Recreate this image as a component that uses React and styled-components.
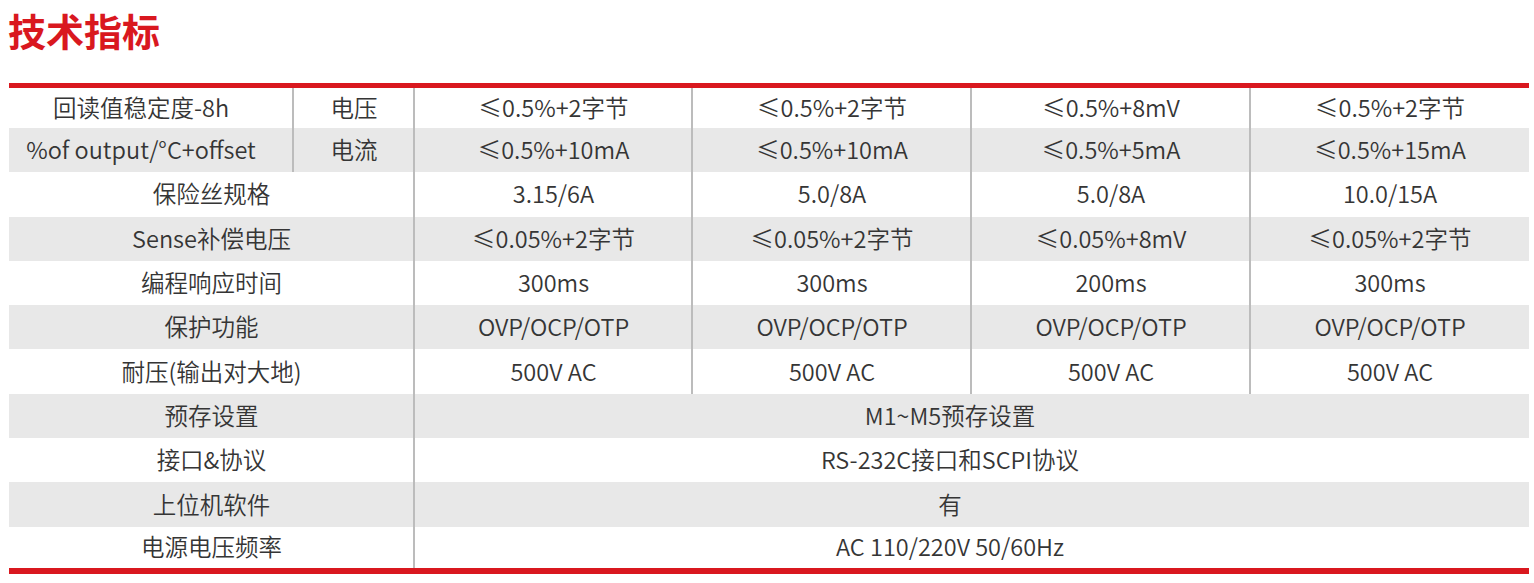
import styled, { createGlobalStyle } from "styled-components";

const GlobalStyle = createGlobalStyle`
  body {
    margin: 0;
    background: #fff;
    font-family: "Noto Sans CJK SC", "Noto Sans", sans-serif;
  }
`;

const RED = "#d9181f";

const specRows = [
  { label: "回读值稳定度-8h", sub: "电压", values: ["≤0.5%+2字节", "≤0.5%+2字节", "≤0.5%+8mV", "≤0.5%+2字节"] },
  { label: "%of output/°C+offset", sub: "电流", values: ["≤0.5%+10mA", "≤0.5%+10mA", "≤0.5%+5mA", "≤0.5%+15mA"] },
  { label: "保险丝规格", values: ["3.15/6A", "5.0/8A", "5.0/8A", "10.0/15A"] },
  { label: "Sense补偿电压", values: ["≤0.05%+2字节", "≤0.05%+2字节", "≤0.05%+8mV", "≤0.05%+2字节"] },
  { label: "编程响应时间", values: ["300ms", "300ms", "200ms", "300ms"] },
  { label: "保护功能", values: ["OVP/OCP/OTP", "OVP/OCP/OTP", "OVP/OCP/OTP", "OVP/OCP/OTP"] },
  { label: "耐压(输出对大地)", values: ["500V AC", "500V AC", "500V AC", "500V AC"] },
  { label: "预存设置", wide: "M1~M5预存设置" },
  { label: "接口&协议", wide: "RS-232C接口和SCPI协议" },
  { label: "上位机软件", wide: "有" },
  { label: "电源电压频率", wide: "AC 110/220V 50/60Hz" },
];

export default function App() {
  return (
    <Page>
      <GlobalStyle />
      <Title>技术指标</Title>
      <Table>
        {specRows.map((row, i) => (
          <Row key={row.label} $shade={i % 2 === 1} $h={i === 0 ? 40 : i === specRows.length - 1 ? 41 : 44.3}>
            {row.sub ? (
              <>
                <Cell $padRight={20}>{row.label}</Cell>
                <Cell $line>{row.sub}</Cell>
              </>
            ) : (
              <Cell $span={2}>{row.label}</Cell>
            )}
            {row.wide ? (
              <Cell $span={4} $line $padRight={44}>{row.wide}</Cell>
            ) : (
              row.values.map((v, j) => (
                <Cell key={j} $line>{v}</Cell>
              ))
            )}
          </Row>
        ))}
      </Table>
    </Page>
  );
}

// ==== Styled Components ====

const Page = styled.div`
  padding: 4px 5px 0 9px;
  width: 1520px;
`;

const Title = styled.h1`
  margin: 0 0 0 -1px;
  height: 79px;
  font-size: 38px;
  line-height: 52px;
  font-weight: 700;
  color: ${RED};
  letter-spacing: 0;
`;

const Table = styled.div`
  border-top: 5px solid ${RED};
  border-bottom: 6px solid ${RED};
  display: flex;
  flex-direction: column;
`;

const Row = styled.div`
  display: grid;
  grid-template-columns: 284px 121px 278px 279px 279px 279px;
  height: ${({ $h }) => $h}px;
  background: ${({ $shade }) => ($shade ? "#e8e8e8" : "#fff")};
`;

const Cell = styled.div`
  grid-column: span ${({ $span }) => $span || 1};
  display: flex;
  align-items: center;
  justify-content: center;
  padding-right: ${({ $padRight }) => $padRight || 0}px;
  padding-bottom: 2px;
  border-left: ${({ $line }) => ($line ? "2px solid #bcbcbc" : "none")};
  margin-left: ${({ $line }) => ($line ? "-1px" : "0")};
  font-size: 23.5px;
  font-weight: 350;
  color: #353535;
  white-space: nowrap;
`;
